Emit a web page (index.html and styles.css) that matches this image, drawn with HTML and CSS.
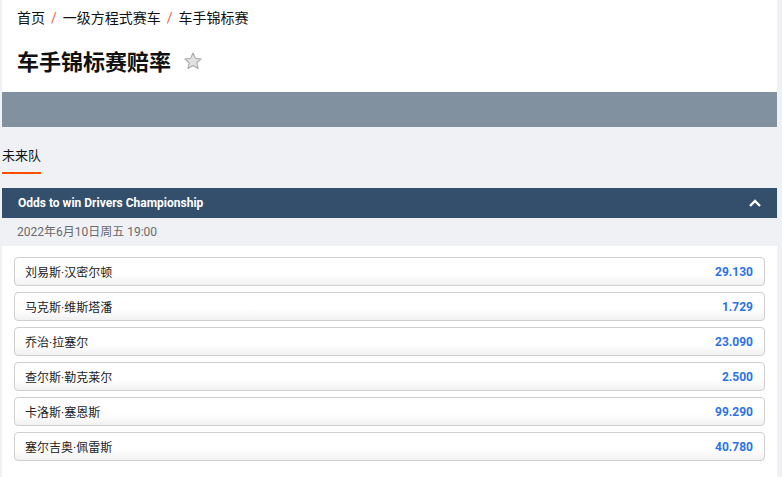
FILE: index.html
```html
<!doctype html>
<html>

<head>
    <meta http-equiv="Content-Type" content="text/html;charset=UTF-8">
    <title>车手锦标赛赔率</title>
    <link rel="stylesheet" href="styles.css">
</head>

<body>
    <div class="page">
        <!-- header with breadcrumbs and title -->
        <div class="hero">
            <div class="crumbs">
                <span>首页</span><span class="sep">/</span><span>一级方程式赛车</span><span class="sep">/</span><span>车手锦标赛</span>
            </div>
            <div class="title-row">
                <h1>车手锦标赛赔率</h1>
                <svg class="star" width="20" height="20" viewBox="0 0 24 24">
                    <path d="M12 2.5l2.9 6.3 6.9.7-5.2 4.6 1.5 6.8L12 17.4l-6.1 3.5 1.5-6.8-5.2-4.6 6.9-.7z" fill="#e2e2e2" stroke="#a9a9a9" stroke-width="1.3" stroke-linejoin="round"/>
                </svg>
            </div>
        </div>
        <div class="banner"></div>

        <div class="tabs">
            <span class="tab active">未来队</span>
        </div>

        <!-- market -->
        <div class="market-head">
            <span>Odds to win Drivers Championship</span>
            <svg width="14" height="10" viewBox="0 0 14 10">
                <path d="M2 8l5-5 5 5" fill="none" stroke="#fff" stroke-width="2.4"/>
            </svg>
        </div>
        <div class="date">2022年6月10日周五 19:00</div>
        <div class="list">
            <div class="row"><span class="name">刘易斯·汉密尔顿</span><span class="odds">29.130</span></div>
            <div class="row"><span class="name">马克斯·维斯塔潘</span><span class="odds">1.729</span></div>
            <div class="row"><span class="name">乔治·拉塞尔</span><span class="odds">23.090</span></div>
            <div class="row"><span class="name">查尔斯·勒克莱尔</span><span class="odds">2.500</span></div>
            <div class="row"><span class="name">卡洛斯·塞恩斯</span><span class="odds">99.290</span></div>
            <div class="row"><span class="name">塞尔吉奥·佩雷斯</span><span class="odds">40.780</span></div>
        </div>
    </div>
</body>

</html>
```

FILE: styles.css
```css
/* page */

body {
    margin: 0;
    background-color: #eff1f5;
    font-family: Roboto, "Noto Sans CJK SC", sans-serif;
    color: #1b1b1b;
}

.page {
    padding: 0 5px 0 2px;
}

/* header */

.hero {
    background-color: #fff;
    height: 92px;
    padding: 0 15px;
}

.crumbs {
    padding-top: 8px;
    font-size: 14px;
    line-height: 20px;
    color: #111;
}

.crumbs .sep {
    color: #f0643c;
    margin: 0 6px;
}

.title-row {
    display: flex;
    align-items: center;
    margin-top: 21px;
}

h1 {
    margin: 0;
    font-size: 22px;
    line-height: 28px;
    font-weight: 700;
    color: #111;
}

.star {
    margin-left: 12px;
    margin-top: -4px;
}

.banner {
    height: 35px;
    background-color: #8291a0;
}

/* tabs */

.tabs {
    display: flex;
    padding-top: 20px;
    margin-bottom: 14px;
}

.tab {
    font-size: 13px;
    line-height: 18px;
    padding-bottom: 7px;
    border-bottom: 2px solid #ff5000;
    color: #111;
}

/* market */

.market-head {
    height: 30px;
    background-color: #344f6b;
    display: flex;
    align-items: center;
    justify-content: space-between;
    padding: 0 15px 0 16px;
    color: #fff;
    font-size: 12px;
    font-weight: 700;
}

.date {
    height: 28px;
    line-height: 28px;
    padding-left: 15px;
    font-size: 12px;
    color: #6b6b6b;
}

.list {
    background-color: #fff;
    padding: 11px 12px 20px;
    display: flex;
    flex-direction: column;
    gap: 6px;
}

.row {
    height: 27px;
    border: 1px solid #cfcfcf;
    border-radius: 4px;
    background: linear-gradient(#fff 60%, #f1f1f1);
    display: flex;
    align-items: center;
    justify-content: space-between;
    padding: 0 11px 0 10px;
    font-size: 12px;
}

.name {
    color: #222;
}

.odds {
    color: #2b73e5;
    font-weight: 700;
}
```
